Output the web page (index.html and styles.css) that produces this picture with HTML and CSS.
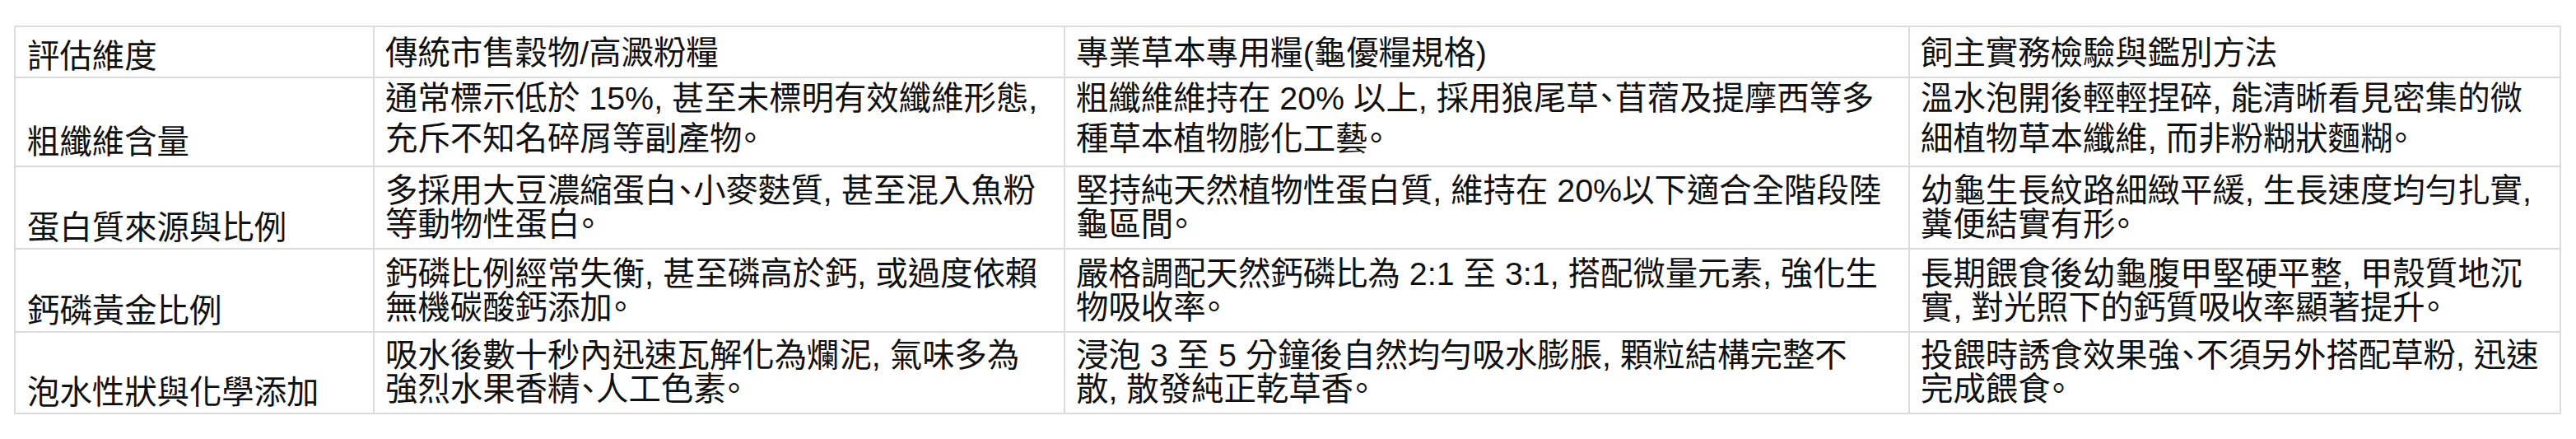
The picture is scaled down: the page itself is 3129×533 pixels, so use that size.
FILE: index.html
```html
<!DOCTYPE html>
<html lang="zh-Hant">
<head>
<meta charset="utf-8">
<title>龜糧評估比較表</title>
<link rel="stylesheet" href="styles.css">
</head>
<body>
<div class="page">
  <table class="compare">
    <colgroup>
      <col class="c-dim">
      <col class="c-trad">
      <col class="c-pro">
      <col class="c-check">
    </colgroup>
    <thead>
      <tr class="r-head">
        <th class="dim">評估維度</th>
        <th>傳統市售穀物/高澱粉糧</th>
        <th>專業草本專用糧(龜優糧規格)</th>
        <th>飼主實務檢驗與鑑別方法</th>
      </tr>
    </thead>
    <tbody>
      <tr class="r-1">
        <td class="dim">粗纖維含量</td>
        <td>通常標示低於 15%, 甚至未標明有效纖維形態,<br>充斥不知名碎屑等副產物。</td>
        <td>粗纖維維持在 20% 以上, 採用狼尾草、苜蓿及提摩西等多<br>種草本植物膨化工藝。</td>
        <td>溫水泡開後輕輕捏碎, 能清晰看見密集的微<br>細植物草本纖維, 而非粉糊狀麵糊。</td>
      </tr>
      <tr class="r-2">
        <td class="dim">蛋白質來源與比例</td>
        <td>多採用大豆濃縮蛋白、小麥麩質, 甚至混入魚粉<br>等動物性蛋白。</td>
        <td>堅持純天然植物性蛋白質, 維持在 20%以下適合全階段陸<br>龜區間。</td>
        <td>幼龜生長紋路細緻平緩, 生長速度均勻扎實,<br>糞便結實有形。</td>
      </tr>
      <tr class="r-3">
        <td class="dim">鈣磷黃金比例</td>
        <td>鈣磷比例經常失衡, 甚至磷高於鈣, 或過度依賴<br>無機碳酸鈣添加。</td>
        <td>嚴格調配天然鈣磷比為 2:1 至 3:1, 搭配微量元素, 強化生<br>物吸收率。</td>
        <td>長期餵食後幼龜腹甲堅硬平整, 甲殼質地沉<br>實, 對光照下的鈣質吸收率顯著提升。</td>
      </tr>
      <tr class="r-4">
        <td class="dim">泡水性狀與化學添加</td>
        <td>吸水後數十秒內迅速瓦解化為爛泥, 氣味多為<br>強烈水果香精、人工色素。</td>
        <td>浸泡 3 至 5 分鐘後自然均勻吸水膨脹, 顆粒結構完整不<br>散, 散發純正乾草香。</td>
        <td>投餵時誘食效果強、不須另外搭配草粉, 迅速<br>完成餵食。</td>
      </tr>
    </tbody>
  </table>
</div>
</body>
</html>
```

FILE: styles.css
```css
html, body {
  margin: 0;
  padding: 0;
  background: #ffffff;
}

.page {
  padding: 31px 0 0 17px;
}

.compare {
  border-collapse: collapse;
  table-layout: fixed;
  width: 3094px;
  color: #111111;
  font-family: "Liberation Sans", "Noto Sans CJK SC", sans-serif;
  font-feature-settings: "halt";
  font-size: 39.4px;
  line-height: 41px;
}

.c-dim { width: 436px; }
.c-trad { width: 839px; }
.c-pro { width: 1026px; }
.c-check { width: 791px; }

.compare th,
.compare td {
  border: 2px solid #dcdcdc;
  padding: 0 6px 8px 13px;
  text-align: left;
  vertical-align: bottom;
  font-weight: 400;
  white-space: nowrap;
}

.compare .dim {
  font-family: "Noto Sans CJK TC", "Noto Sans CJK SC", sans-serif;
  font-feature-settings: normal;
  padding-left: 14px;
}

.r-head { height: 62px; }
.r-1 { height: 108px; }
.r-1 td { line-height: 49px; }
.r-2 { height: 100px; }
.r-3 { height: 101px; }
.r-4 { height: 99px; }
```
